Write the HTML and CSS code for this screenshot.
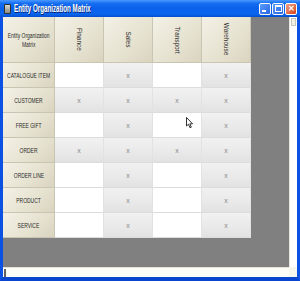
FILE: index.html
```html
<!DOCTYPE html>
<html lang="en">
<head>
    <meta charset="UTF-8">
    <title>Entity Organization Matrix</title>
    <link rel="stylesheet" href="styles.css">
</head>
<body>
    <div class="window">
        <div class="titlebar">
            <div class="app-icon"></div>
            <div class="title"><span>Entity Organization Matrix</span></div>
            <div class="caption-buttons">
                <div class="cap-btn min"><span></span></div>
                <div class="cap-btn max"><span></span></div>
                <div class="cap-btn close">&#10005;</div>
            </div>
        </div>

        <div class="client">
            <div class="viewport">
                <div class="matrix">
                    <div class="corner"><span>Entity Organization<br>Matrix</span></div>
                    <div class="col-head"><span>Finance</span></div>
                    <div class="col-head"><span>Sales</span></div>
                    <div class="col-head"><span>Transport</span></div>
                    <div class="col-head"><span>Warehouse</span></div>

                    <div class="row-head"><span>CATALOGUE ITEM</span></div>
                    <div class="cell"></div>
                    <div class="cell on">x</div>
                    <div class="cell"></div>
                    <div class="cell on">x</div>

                    <div class="row-head"><span>CUSTOMER</span></div>
                    <div class="cell on">x</div>
                    <div class="cell on">x</div>
                    <div class="cell on">x</div>
                    <div class="cell on">x</div>

                    <div class="row-head"><span>FREE GIFT</span></div>
                    <div class="cell"></div>
                    <div class="cell on">x</div>
                    <div class="cell"></div>
                    <div class="cell on">x</div>

                    <div class="row-head"><span>ORDER</span></div>
                    <div class="cell on">x</div>
                    <div class="cell on">x</div>
                    <div class="cell on">x</div>
                    <div class="cell on">x</div>

                    <div class="row-head"><span>ORDER LINE</span></div>
                    <div class="cell"></div>
                    <div class="cell on">x</div>
                    <div class="cell"></div>
                    <div class="cell on">x</div>

                    <div class="row-head"><span>PRODUCT</span></div>
                    <div class="cell"></div>
                    <div class="cell on">x</div>
                    <div class="cell"></div>
                    <div class="cell on">x</div>

                    <div class="row-head"><span>SERVICE</span></div>
                    <div class="cell"></div>
                    <div class="cell on">x</div>
                    <div class="cell"></div>
                    <div class="cell on">x</div>
                </div>
            </div>
            <div class="vscroll">
                <div class="thumb"></div>
            </div>
            <div class="hscroll">
                <div class="hthumb"></div>
            </div>
            <div class="grip"></div>
        </div>

        <svg class="cursor" width="8" height="12" viewBox="0 0 8 12">
            <path d="M0.5 0.5 L0.5 9 L2.5 7.2 L4 10.8 L5.3 10.2 L3.9 6.8 L6.6 6.8 Z" fill="#fff" stroke="#000" stroke-width="0.8"/>
        </svg>
    </div>
</body>
</html>
```

FILE: styles.css
```css
body {
    margin: 0;
    padding: 0;
    width: 300px;
    height: 281px;
    overflow: hidden;
    background: #fff;
    font-family: "Liberation Sans", Arial, sans-serif;
}

.window {
    position: relative;
    width: 300px;
    height: 281px;
    box-sizing: border-box;
    display: flex;
    flex-direction: column;
    background: #0a4fe0;
    border-left: 3px solid #0b51e3;
    border-right: 3px solid #0b51e3;
    border-bottom: 4px solid #0a45d0;
}

.titlebar {
    height: 17px;
    margin: 0 -3px;
    padding: 0 3px 0 4px;
    display: flex;
    align-items: center;
    background: linear-gradient(#4a98ff 0%, #156ef0 20%, #0a60ea 50%, #0866ef 80%, #0550d0 100%);
}

.app-icon {
    width: 5px;
    height: 8px;
    margin-right: 3px;
    background: linear-gradient(#d8d8d0, #8a8a80);
    border: 1px solid #303030;
    border-radius: 1px;
}

.title {
    flex: 1;
    color: #fff;
    font-weight: bold;
    font-size: 10px;
    white-space: nowrap;
    text-shadow: 1px 1px 0 #0a1e70;
}

.title span {
    display: inline-block;
    transform: scaleX(0.62);
    transform-origin: left center;
}

.caption-buttons {
    display: flex;
    gap: 1px;
}

.cap-btn {
    width: 12px;
    height: 12px;
    box-sizing: border-box;
    border: 1px solid #fff;
    border-radius: 2px;
    background: linear-gradient(135deg, #5d9cfc, #2765e3);
    display: flex;
    align-items: center;
    justify-content: center;
    color: #fff;
    font-size: 8px;
    font-weight: bold;
}

.cap-btn.min span {
    width: 4px;
    height: 2px;
    background: #fff;
    margin-top: 5px;
    margin-right: 2px;
}

.cap-btn.max span {
    width: 5px;
    height: 4px;
    border: 1px solid #fff;
    border-top-width: 2px;
}

.cap-btn.close {
    background: linear-gradient(135deg, #f0a080, #d4421c);
}

.client {
    flex: 1;
    display: grid;
    grid-template-columns: 1fr 8px;
    grid-template-rows: 1fr 10px;
    background: #808080;
}

.viewport {
    background: #808080;
    overflow: hidden;
}

.matrix {
    display: grid;
    grid-template-columns: 52px repeat(4, 49px);
    grid-template-rows: 46px repeat(7, 25px);
    width: 249px;
}

.corner, .col-head, .row-head {
    background: linear-gradient(135deg, #f3f1e6 0%, #e6e2d0 60%, #d8d4bf 100%);
    border-right: 1px solid #c9c5b2;
    border-bottom: 1px solid #c9c5b2;
    display: flex;
    align-items: center;
    justify-content: center;
    text-align: center;
    color: #2a2a2a;
    font-size: 7.5px;
    white-space: nowrap;
    overflow: hidden;
}

.corner span, .row-head span {
    display: inline-block;
    transform: scaleX(0.66);
}

.corner {
    line-height: 9px;
}

.col-head span {
    writing-mode: vertical-rl;
    transform: scaleY(0.85);
}

.cell {
    background: #fff;
    border-right: 1px solid #e2e2e2;
    border-bottom: 1px solid #dcdcdc;
    display: flex;
    align-items: center;
    justify-content: center;
    color: #8a8a8a;
    font-size: 7px;
}

.cell.on {
    background: linear-gradient(180deg, #f1f1f1 0%, #e9e9e9 60%, #e2e2e2 100%);
}

.vscroll {
    background: #fff;
    border-left: 1px solid #e8e8e0;
    grid-row: 1;
    grid-column: 2;
}

.thumb {
    height: 6px;
    margin: 1px 1px;
    background: #f2f0e6;
    border: 1px solid #c8c6b8;
}

.hscroll {
    background: #fdfcf6;
    border-top: 1px solid #e4e2d8;
    grid-row: 2;
    grid-column: 1;
}

.hthumb {
    width: 2px;
    height: 8px;
    margin: 1px 0 0 1px;
    background: #606060;
}

.grip {
    background: #f6f5ee;
    grid-row: 2;
    grid-column: 2;
}

.cursor {
    position: absolute;
    left: 183px;
    top: 117px;
}
```
